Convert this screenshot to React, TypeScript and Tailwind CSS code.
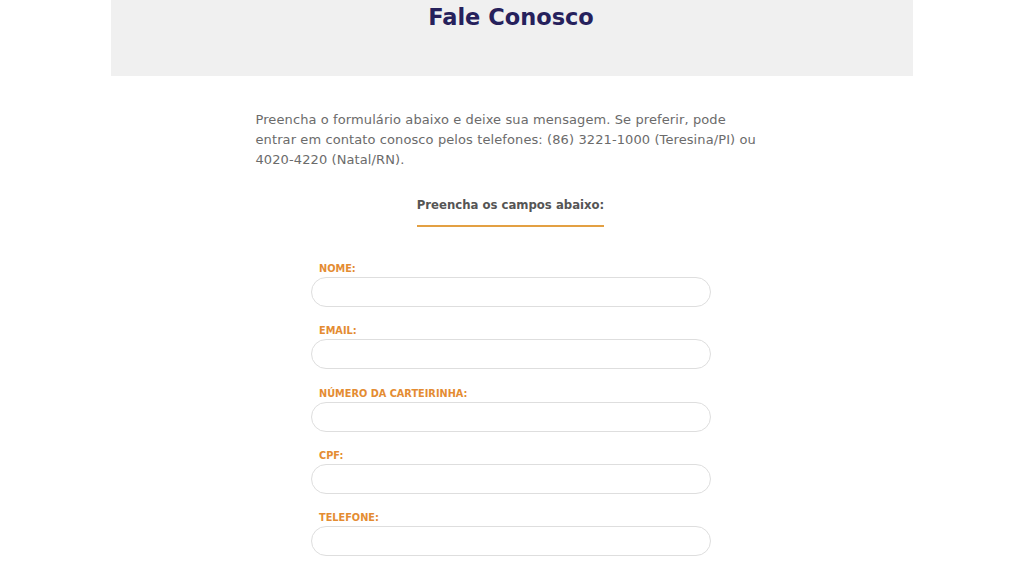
import React from 'react';

const fields = ['NOME:', 'EMAIL:', 'NÚMERO DA CARTEIRINHA:', 'CPF:', 'TELEFONE:'];

export default function App() {
  return (
    <div className="min-h-screen bg-white font-['DejaVu_Sans',sans-serif]">
      {/* Header */}
      <div className="mx-auto h-[76px] w-[802px] bg-[#f0f0f0] pt-[3px] text-center">
        <h1 className="pr-[2px] text-[22.5px] font-bold leading-[28px] text-[#26215c]">Fale Conosco</h1>
      </div>

      {/* Intro */}
      <div className="mx-auto mt-[34px] w-[515px] pl-[1px]">
        <p className="whitespace-nowrap text-[13px] leading-[20px] tracking-[0.1px] text-[#6b6b6b]">
          Preencha o formulário abaixo e deixe sua mensagem. Se preferir, pode
          <br />
          entrar em contato conosco pelos telefones: (86) 3221-1000 (Teresina/PI) ou
          <br />
          4020-4220 (Natal/RN).
        </p>
      </div>

      <div className="mt-[22px] pr-[3px] text-center">
        <h2 className="inline-block border-b-2 border-[#e3a043] pb-[10px] text-[11.7px] font-bold leading-[20px] text-[#555555]">
          Preencha os campos abaixo:
        </h2>
      </div>

      {/* Form */}
      <form className="mx-auto mt-[36px] flex w-[400px] -translate-x-px flex-col gap-[18.3px]">
        {fields.map((f) => (
          <div key={f} className="flex flex-col gap-[2px]">
            <label className="pl-2 text-[9.75px] font-bold leading-[12px] text-[#e48c32]">{f}</label>
            <input
              type="text"
              className="h-[30px] w-full rounded-full border border-[#dedede] bg-white px-4 text-[13px] outline-none"
            />
          </div>
        ))}
      </form>
    </div>
  );
}
